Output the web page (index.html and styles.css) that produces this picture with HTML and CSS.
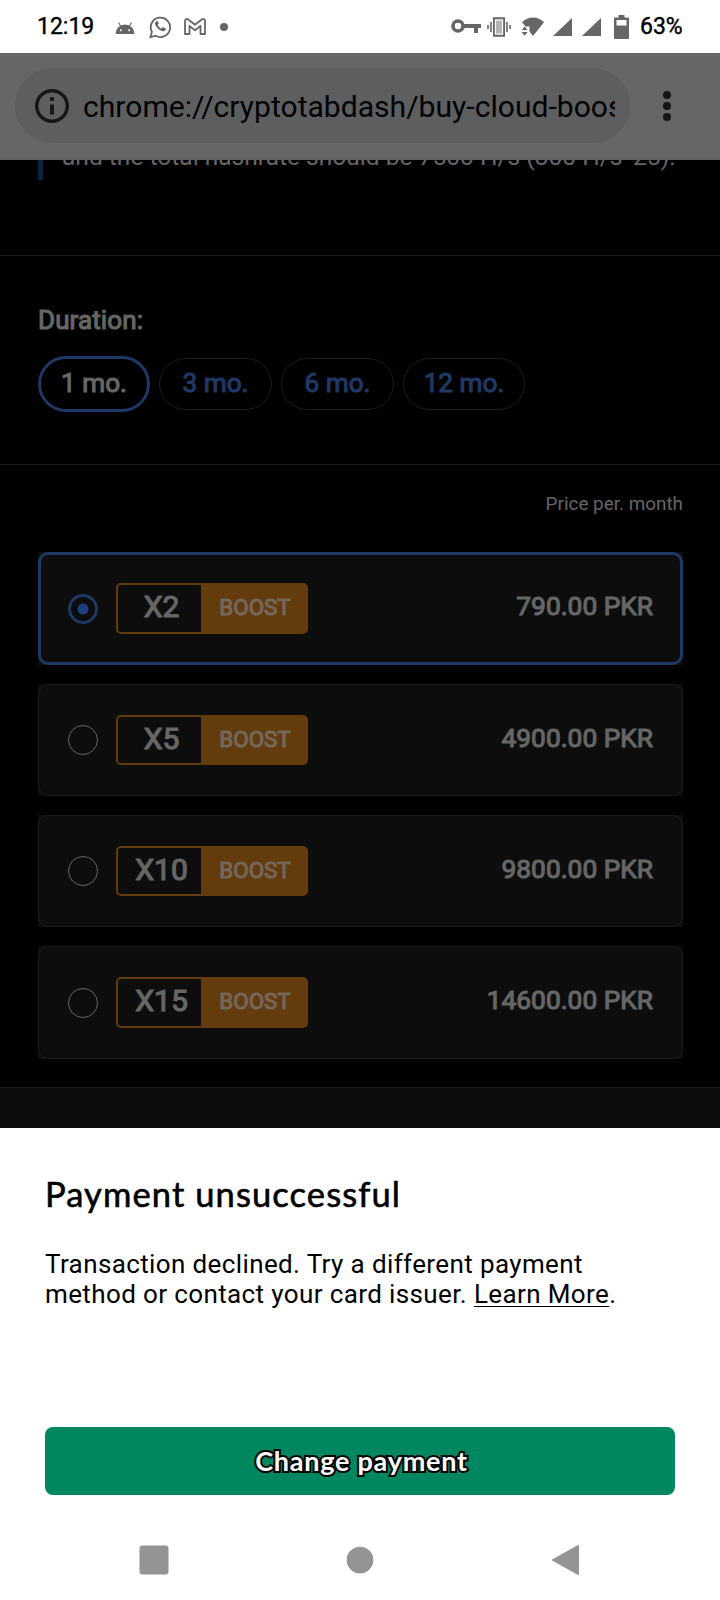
FILE: index.html
```html
<!DOCTYPE html>
<html lang="en">
<head>
    <meta charset="UTF-8">
    <meta name="viewport" content="width=device-width, initial-scale=1.0">
    <title>Payment unsuccessful</title>
    <link rel="stylesheet" href="styles.css">
</head>
<body>
    <header class="status-bar">
        <span class="clock">12:19</span>
        <svg class="ic-android" width="20" height="14" viewBox="0 0 20 14">
            <path d="M.5 13a9.5 9.5 0 0 1 19 0z" fill="#666"/>
            <path d="M3.6 1.4l2.2 4M16.4 1.4l-2.2 4" stroke="#666" stroke-width="1.1"/>
            <circle cx="5.8" cy="9.3" r="1" fill="#fff"/>
            <circle cx="14.2" cy="9.3" r="1" fill="#fff"/>
        </svg>
        <svg class="ic-whatsapp" width="22" height="24" viewBox="0 0 22 24">
            <path d="M1.4 22.2l1.5-5.3a9.7 9.7 0 1 1 3.7 3.8z" fill="none" stroke="#666" stroke-width="1.8"/>
            <path d="M7.3 6.2c-1.7 1-1.6 3-.2 5 1.8 2.7 4.3 4.9 7 5 1.7 0 2.9-1.1 2.7-2.8l-2.8-1.4-1.5 1.6c-1.8-.8-3-2-3.9-3.6l1.2-1.500-1.200-2.400z" fill="#666"/>
        </svg>
        <svg class="ic-gmail" width="22" height="17" viewBox="0 0 22 17">
            <path d="M1 2.8C1 1 3 .4 4.3 1.5L11 6.7l6.7-5.2C19 .4 21 1 21 2.8V16h-4.500V8L11 12.200 5.500 8v8H1z" fill="none" stroke="#666" stroke-width="1.8" stroke-linejoin="round"/>
        </svg>
        <span class="dot"></span>
        <svg class="ic-key" width="30" height="16" viewBox="0 0 30 16">
            <circle cx="7" cy="7" r="5" fill="none" stroke="#666" stroke-width="3.6"/>
            <path d="M13 5h17v4h-3v5h-4V9H13z" fill="#666"/>
        </svg>
        <svg class="ic-vibrate" width="24" height="20" viewBox="0 0 24 20">
            <rect x="6.900" y="1.200" width="10.200" height="17.600" fill="#b5b5b5" stroke="#666" stroke-width="1.900"/>
            <rect x="8.400" y="3" width="7.200" height="14" fill="none" stroke="#fff" stroke-width="1"/>
            <path d="M4 5v10M20 5v10M1 8v4M23 8v4" stroke="#666" stroke-width="1.600"/>
        </svg>
        <svg class="ic-wifi" width="24" height="20" viewBox="0 0 24 20">
            <path d="M1 5.300C7-1 17-1 23 5.300L12 19 8.500 14.500V9.500H4.500z" fill="#666"/>
            <path d="M.6 13l3-3.500 3 3.500zM.6 15h6l-3 3.700z" fill="#666"/>
        </svg>
        <svg class="ic-signal" width="19" height="18" viewBox="0 0 19 18">
            <path d="M0 18L19 0v18z" fill="#666"/>
        </svg>
        <svg class="ic-signal" width="19" height="18" viewBox="0 0 19 18">
            <path d="M0 18L19 0v18z" fill="#666"/>
        </svg>
        <svg class="ic-battery" width="15" height="24" viewBox="0 0 15 24">
            <path d="M4.500 0h6v2.500H14a1 1 0 0 1 1 1V23a1 1 0 0 1-1 1H1a1 1 0 0 1-1-1V3.500a1 1 0 0 1 1-1h3.500z" fill="#666"/>
            <rect x="2.500" y="5" width="10" height="5.500" fill="#fff"/>
        </svg>
        <span class="percent">63%</span>
    </header>

    <div class="toolbar">
        <div class="url-box">
            <svg class="ic-info" width="34" height="34" viewBox="0 0 34 34">
                <circle cx="17" cy="17" r="15.300" fill="none" stroke="#151617" stroke-width="3.400"/>
                <path d="M15 8.300h4v3.700h-4zM15 15.500h4v10h-4z" fill="#151617"/>
            </svg>
            <span class="url">chrome://cryptotabdash/buy-cloud-boos</span>
        </div>
        <div class="menu"><i></i><i></i><i></i></div>
    </div>

    <main>
        <section class="note">
            <p>and the total hashrate should be 7500 H/s (300 H/s*25).</p>
        </section>

        <section class="duration">
            <h2>Duration:</h2>
            <div class="periods">
                <span class="period active">1 mo.</span>
                <span class="period">3 mo.</span>
                <span class="period">6 mo.</span>
                <span class="period long">12 mo.</span>
            </div>
        </section>

        <section class="plans">
            <p class="hint">Price per. month</p>
            <div class="plan selected">
                <span class="radio"></span>
                <div class="badge"><b>X2</b><span>BOOST</span></div>
                <span class="price">790.00 PKR</span>
            </div>
            <div class="plan">
                <span class="radio"></span>
                <div class="badge"><b>X5</b><span>BOOST</span></div>
                <span class="price">4900.00 PKR</span>
            </div>
            <div class="plan">
                <span class="radio"></span>
                <div class="badge"><b>X10</b><span>BOOST</span></div>
                <span class="price">9800.00 PKR</span>
            </div>
            <div class="plan last">
                <span class="radio"></span>
                <div class="badge"><b>X15</b><span>BOOST</span></div>
                <span class="price">14600.00 PKR</span>
            </div>
        </section>
        <div class="page-footer"></div>
    </main>

    <div class="sheet">
        <h1>Payment unsuccessful</h1>
        <p>Transaction declined. Try a different payment<br>method or contact your card issuer. <a href="#">Learn More</a>.</p>
        <button type="button">Change payment</button>
    </div>

    <nav class="nav-bar">
        <svg width="30" height="32" viewBox="0 0 30 32"><rect x=".5" y="1.500" width="29" height="29" rx="3" fill="#949494"/></svg>
        <svg width="30" height="32" viewBox="0 0 30 32"><circle cx="15" cy="16" r="13.300" fill="#949494"/></svg>
        <svg width="30" height="32" viewBox="0 0 30 32"><path d="M2 16L27 2v28z" fill="#949494" stroke="#949494" stroke-width="2" stroke-linejoin="round"/></svg>
    </nav>
</body>
</html>
```
FILE: styles.css
```css
:root {
    --blue: #1f3865;
    --grey: #666;
    --orange: #633b0c;
    --card: #0d0d0d;
    --line: #1c1c1c;
}

* {
    margin: 0;
    padding: 0;
    box-sizing: border-box;
}

body {
    width: 720px;
    height: 1600px;
    overflow: hidden;
    background: #fff;
    font-family: Roboto, sans-serif;
}

svg {
    display: block;
    flex: none;
}

/* Status bar */
.status-bar {
    height: 53px;
    display: flex;
    align-items: center;
    padding: 0 37px;
    color: #000;
    font-size: 23px;
    -webkit-text-stroke: 0.4px;
}

.clock {
    width: 78px;
}

.ic-android {
    margin-top: 3px;
}

.ic-whatsapp {
    margin-left: 14px;
}

.ic-gmail {
    margin-left: 13px;
}

.dot {
    width: 8px;
    height: 8px;
    margin-left: 14px;
    border-radius: 50%;
    background: #666;
}

.ic-key {
    margin-left: auto;
}

.ic-vibrate {
    margin-left: 6px;
}

.ic-wifi {
    margin-left: 10px;
}

.ic-signal {
    margin-left: 8px;
}

.ic-signal + .ic-signal {
    margin-left: 10px;
}

.ic-battery {
    margin-left: 13px;
}

.percent {
    width: 43px;
    margin-left: 11px;
}

/* Browser toolbar */
.toolbar {
    height: 107px;
    display: flex;
    padding: 15px 0 0 15px;
    background: #666;
    border-bottom: 2px solid #5d5e5e;
}

.url-box {
    width: 615px;
    height: 75px;
    display: flex;
    align-items: center;
    padding: 0 15px 0 20px;
    border-radius: 38px;
    background: #5d5e60;
}

.url {
    flex: 1;
    margin-left: 14px;
    padding-top: 2px;
    overflow: hidden;
    white-space: nowrap;
    font-size: 30.1px;
    line-height: 40px;
    color: #000;
}

.menu {
    height: 75px;
    margin-left: 33px;
    display: flex;
    flex-direction: column;
    justify-content: center;
    gap: 3px;
}

.menu i {
    width: 8px;
    height: 8px;
    border-radius: 50%;
    background: #151515;
}

/* Page under the scrim */
main {
    height: 968px;
    overflow: hidden;
    background: #000;
    color: var(--grey);
}

.note {
    height: 96px;
    overflow: hidden;
    padding-left: 38px;
    border-bottom: 1px solid var(--line);
}

.note p {
    height: 38px;
    margin-top: -18px;
    padding-left: 19px;
    border-left: 5px solid #0b2440;
    font-size: 24.55px;
    line-height: 29px;
    white-space: nowrap;
}

.duration {
    height: 209px;
    padding: 48px 38px 0;
    border-bottom: 1px solid var(--line);
}

.duration h2 {
    font-size: 26px;
    font-weight: 400;
    line-height: 33px;
    letter-spacing: 0.1px;
    -webkit-text-stroke: 1.1px;
}

.periods {
    display: flex;
    align-items: center;
    gap: 9px;
    margin-top: 19px;
}

.period {
    width: 113px;
    height: 52px;
    border: 1px solid var(--line);
    border-radius: 28px;
    text-align: center;
    font-size: 26.2px;
    line-height: 48px;
    color: var(--blue);
    -webkit-text-stroke: 1.1px;
}

.period.active {
    width: 112px;
    height: 56px;
    border: 3px solid var(--blue);
    color: var(--grey);
}

.period.long {
    width: 122px;
}

.plans {
    padding: 0 37px 0 38px;
}

.hint {
    height: 87px;
    padding-top: 24px;
    text-align: right;
    font-size: 18.9px;
    line-height: 29px;
}

.plan {
    position: relative;
    height: 112px;
    display: flex;
    align-items: center;
    margin-bottom: 19px;
    padding: 0 30px;
    background: var(--card);
}

/* rounded frame over the square card */
.plan::before {
    content: "";
    position: absolute;
    inset: 0;
    border: 1px solid var(--line);
    border-radius: 10px;
}

.plan.selected,
.plan.last {
    height: 113px;
}

.plan.selected::before {
    border: 3px solid var(--blue);
}

.radio {
    width: 30px;
    height: 30px;
    border: 1px solid #666;
    border-radius: 50%;
}

.selected .radio {
    border: 3px solid var(--blue);
    background: radial-gradient(circle, #1f3f7a 5px, transparent 6px);
}

.badge {
    width: 192px;
    height: 50px;
    display: flex;
    margin-left: 18px;
    border: 2px solid var(--orange);
    border-radius: 5px;
    text-align: center;
}

.selected .badge,
.last .badge {
    height: 51px;
}

.badge b {
    width: 83px;
    padding-left: 4px;
    font-size: 30px;
    font-weight: 400;
    line-height: 43px;
    -webkit-text-stroke: 1.2px;
}

.badge span {
    flex: 1;
    padding-left: 3px;
    background: var(--orange);
    color: #74675a;
    font-size: 22.4px;
    line-height: 44px;
    -webkit-text-stroke: 1.1px;
}

.price {
    margin-left: auto;
    padding-bottom: 5px;
    font-size: 26.3px;
    -webkit-text-stroke: 1.1px;
}

.page-footer {
    height: 60px;
    margin-top: 28px;
    border-top: 1px solid var(--line);
    background: var(--card);
}

/* Payment sheet */
.sheet {
    height: 392px;
    padding: 45px 45px 0;
    color: #000;
}

.sheet h1 {
    font-family: Lato, sans-serif;
    font-size: 34.5px;
    font-weight: 400;
    line-height: 41px;
    letter-spacing: 1.1px;
    -webkit-text-stroke: 0.6px;
}

.sheet p {
    height: 174px;
    margin-top: 35px;
    font-size: 26px;
    line-height: 30px;
    letter-spacing: 0.38px;
    white-space: nowrap;
}

.sheet a {
    color: #000;
    text-decoration: underline;
    text-decoration-thickness: 1px;
    text-underline-offset: 3px;
}

.sheet button {
    width: 630px;
    height: 68px;
    margin-top: 4px;
    padding: 0 0 2px 3px;
    border: none;
    border-radius: 8px;
    background: #01875f;
    color: #fff;
    font-family: Lato, sans-serif;
    font-size: 27px;
    font-weight: 700;
    letter-spacing: 0.75px;
    -webkit-text-stroke: 4px #000;
    paint-order: stroke fill;
}

/* System navigation */
.nav-bar {
    height: 80px;
    display: flex;
    justify-content: space-between;
    padding: 24px 139px 0;
}
```
